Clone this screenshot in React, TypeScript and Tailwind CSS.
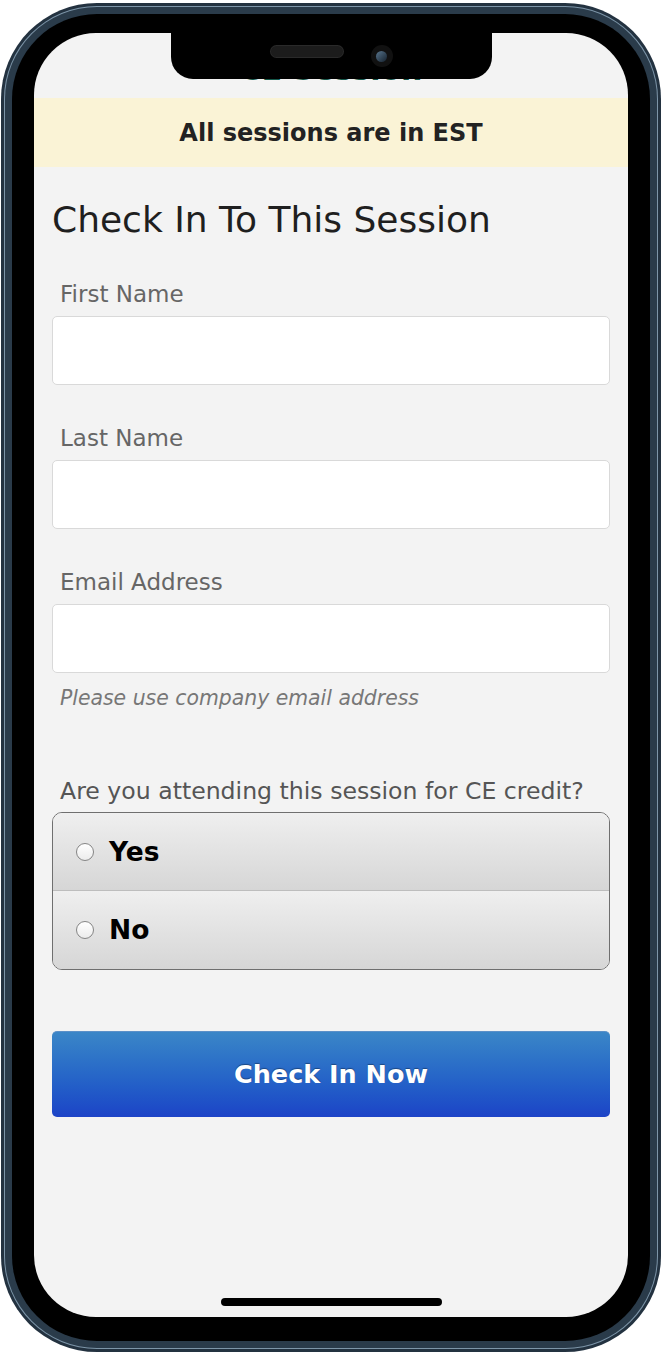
import React from "react";

const font = { fontFamily: '"DejaVu Sans", Verdana, sans-serif' };

function Field({ label }: { label: string }) {
  return (
    <div className="flex flex-col">
      <label className="pl-[8px] text-[23px] leading-[30px] text-[#666]">{label}</label>
      <div className="mt-[7px] h-[69px] rounded-[5px] border border-[#d9d9d9] bg-white" />
    </div>
  );
}

function Radio({ label, last }: { label: string; last?: boolean }) {
  return (
    <div
      className={
        "flex h-[78px] items-center gap-[15px] bg-gradient-to-b from-[#efefef] to-[#d6d6d6] pl-[23px] " +
        (last ? "" : "border-b border-[#bdbdbd]")
      }
    >
      <span className="h-[18px] w-[18px] rounded-full border border-[#858585] bg-gradient-to-b from-[#ffffff] to-[#ececec]" />
      <span className="text-[26.5px] font-bold text-black">{label}</span>
    </div>
  );
}

export default function App() {
  return (
    <div className="h-[1354px] w-[662px] bg-white px-[1px] pb-[2px] pt-[3px]" style={font}>
      <div className="h-full rounded-[96px] bg-[#233240] p-[3px]">
        <div className="h-full rounded-[93px] bg-[#7d95a8] p-[1px]">
          <div className="h-full rounded-[92px] bg-[#2a3b4a] p-[7px]">
            <div className="h-full rounded-[85px] bg-black px-[22px] pb-[24px] pt-[19px]">
              <div className="relative h-full overflow-hidden rounded-[62px] bg-[#f3f3f3]">
                {/* notch */}
                <div className="absolute left-[137px] top-0 flex h-[46px] w-[321px] items-start justify-center gap-[28px] rounded-b-[22px] bg-black pt-[12px]">
                  <div className="mt-[1px] h-[11px] w-[72px] rounded-full bg-[#1c1c1c] ring-1 ring-[#2a2a2a]" />
                  <div className="flex h-[22px] w-[22px] items-center justify-center rounded-full bg-[#111]">
                    <div className="h-[11px] w-[11px] rounded-full bg-gradient-to-br from-[#5a7790] to-[#16222e]" />
                  </div>
                </div>
                {/* hidden title */}
                <div className="flex h-[65px] items-start justify-center pt-[20px]">
                  <span className="text-[30px] font-bold leading-[34px] text-[#17594a]">CE Session</span>
                </div>
                {/* banner */}
                <div className="flex h-[69px] items-center justify-center bg-[#faf3d6]">
                  <span className="text-[24px] font-bold text-[#222]">All sessions are in EST</span>
                </div>
                <div className="px-[18px]">
                  <h1 className="pt-[31px] text-[36px] leading-[44px] text-[#1f1f1f]">Check In To This Session</h1>
                  <div className="mt-[37px] flex flex-col gap-[38px]">
                    <Field label="First Name" />
                    <Field label="Last Name" />
                    <div className="flex flex-col">
                      <Field label="Email Address" />
                      <p className="mt-[11px] pl-[8px] text-[20.4px] italic leading-[28px] text-[#777]">
                        Please use company email address
                      </p>
                    </div>
                  </div>
                  <p className="mt-[63px] pl-[8px] text-[23.6px] leading-[32px] text-[#555]">
                    Are you attending this session for CE credit?
                  </p>
                  <div className="mt-[5px] overflow-hidden rounded-[10px] border border-[#6f6f6f]">
                    <Radio label="Yes" />
                    <Radio label="No" last />
                  </div>
                  <button className="mt-[61px] flex h-[86px] w-full items-center justify-center rounded-[5px] border-t border-[#5b90c8] bg-gradient-to-b from-[#3b86c7] to-[#1d43c7] text-[25.5px] font-bold text-white [text-shadow:0_-1px_1px_rgba(0,0,0,0.35)]">
                    Check In Now
                  </button>
                </div>
                {/* home indicator */}
                <div className="absolute bottom-[11px] left-[187px] h-[8px] w-[221px] rounded-full bg-black" />
              </div>
            </div>
          </div>
        </div>
      </div>
    </div>
  );
}
